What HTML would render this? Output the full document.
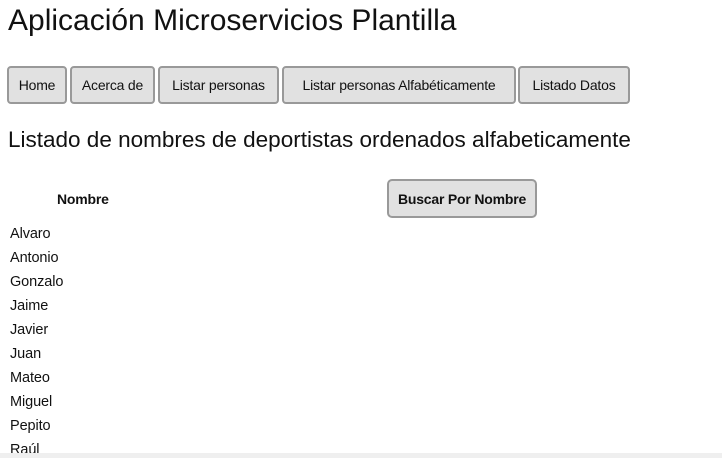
<!DOCTYPE html>
<html><head><meta charset="utf-8"><style>
body{margin:0;width:722px;height:458px;overflow:hidden;background:#fff;font-family:"Liberation Sans",sans-serif;color:#111;position:relative}
.a{position:absolute;white-space:nowrap}
h1{position:absolute;left:8px;top:4px;margin:0;font-weight:normal;font-size:30px;letter-spacing:0px}
h2{position:absolute;left:8px;top:127px;margin:0;font-weight:normal;font-size:22.5px;letter-spacing:0px}
.b{position:absolute;top:66px;height:34px;border:2px solid #999;border-radius:4px;background:#e1e1e1;font-size:14px;display:flex;align-items:center;justify-content:center;letter-spacing:-0.2px;box-sizing:content-box}
.n{position:absolute;left:10px;font-size:14.5px;letter-spacing:-0.1px}
.bar{position:absolute;left:0;top:453px;width:722px;height:5px;background:#efefef}
</style></head><body>
<h1>Aplicación Microservicios Plantilla</h1>
<div class="b" style="left:7px;width:56px">Home</div>
<div class="b" style="left:70px;width:81px">Acerca de</div>
<div class="b" style="left:158px;width:117px">Listar personas</div>
<div class="b" style="left:282px;width:230px">Listar personas Alfabéticamente</div>
<div class="b" style="left:518px;width:108px">Listado Datos</div>
<h2>Listado de nombres de deportistas ordenados alfabeticamente</h2>
<div class="a" style="left:57px;top:191px;font-size:14px;font-weight:bold;letter-spacing:-0.2px">Nombre</div>
<div class="b" style="left:387px;top:179px;width:146px;height:35px;font-weight:bold;border-radius:5px">Buscar Por Nombre</div>
<div class="n" style="top:226px">Alvaro</div>
<div class="n" style="top:250px">Antonio</div>
<div class="n" style="top:274px">Gonzalo</div>
<div class="n" style="top:298px">Jaime</div>
<div class="n" style="top:322px">Javier</div>
<div class="n" style="top:346px">Juan</div>
<div class="n" style="top:370px">Mateo</div>
<div class="n" style="top:394px">Miguel</div>
<div class="n" style="top:418px">Pepito</div>
<div class="n" style="top:442px">Raúl</div>
<div class="bar"></div>
</body></html>
